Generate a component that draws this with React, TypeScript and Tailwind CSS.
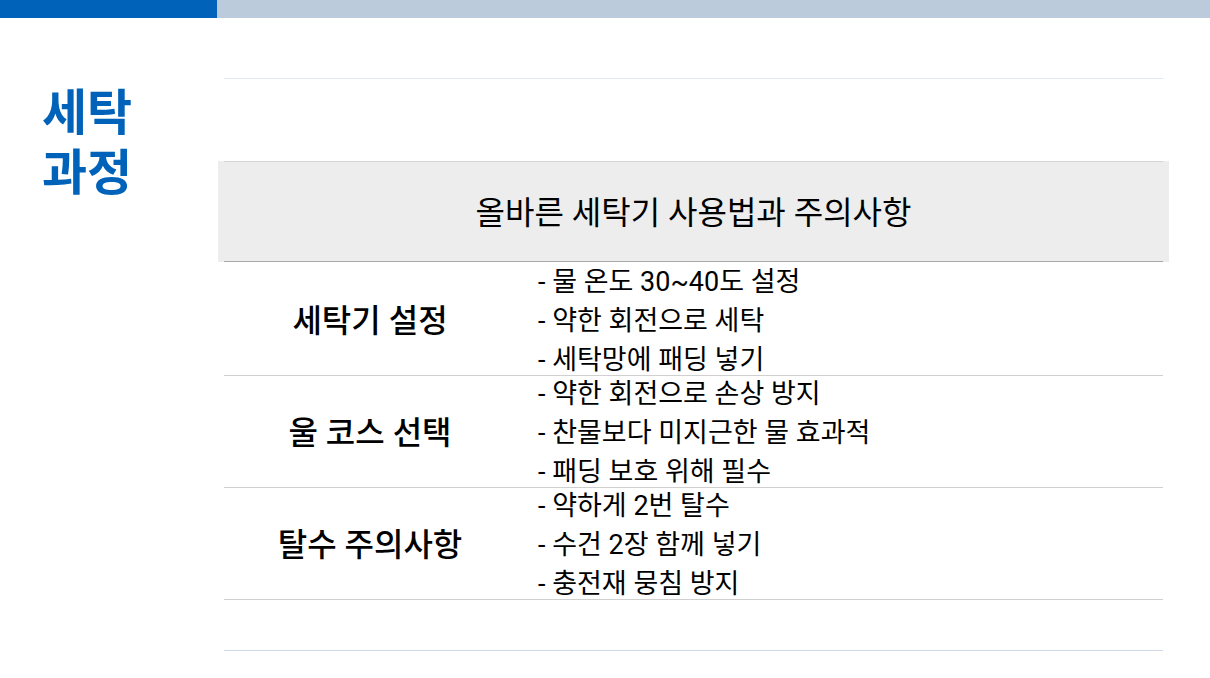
import React from 'react'

const rows = [
    { label: '세탁기 설정', items: ['- 물 온도 30~40도 설정', '- 약한 회전으로 세탁', '- 세탁망에 패딩 넣기'] },
    { label: '울 코스 선택', items: ['- 약한 회전으로 손상 방지', '- 찬물보다 미지근한 물 효과적', '- 패딩 보호 위해 필수'] },
    { label: '탈수 주의사항', items: ['- 약하게 2번 탈수', '- 수건 2장 함께 넣기', '- 충전재 뭉침 방지'] },
]

const font = { fontFamily: 'Roboto, "Noto Sans CJK KR", sans-serif' }

export default function App() {
    return (
        <div className="w-[1210px] h-[678px] bg-white overflow-hidden" style={font}>
            <div className="flex h-[18px]">
                <div className="w-[217px] bg-[#0062b8]" />
                <div className="flex-1 bg-[#bccbdb]" />
            </div>

            <div className="flex">
                <div className="w-[218px] pl-[42px] pt-[66px]">
                    <h1 className="text-[49px] leading-[60px] font-bold text-[#0062b8]">
                        세탁
                        <br />
                        과정
                    </h1>
                </div>

                <div className="w-[951px] pt-[60px]">
                    <div className="mx-[6px] border-t border-[#e2e8f0] h-[83px]" />

                    <div className="bg-[#ededed] px-[6px]">
                        <div className="h-[101px] pt-[3px] border-t border-[#d4d4d4] border-b border-b-[#a8a8a8] flex items-center justify-center">
                            <span className="text-[32px] text-black">올바른 세탁기 사용법과 주의사항</span>
                        </div>
                    </div>

                    <div className="mx-[6px] mt-[2px]">
                        {rows.map((row) => (
                            <div key={row.label} className="flex h-[112px] border-b border-[#d0d0d0]">
                                <div className="w-[292px] pt-[2px] flex items-center justify-center">
                                    <span className="text-[32px] font-medium text-black">{row.label}</span>
                                </div>
                                <div className="flex-1 pl-[22px] pt-[4px] flex flex-col justify-center">
                                    {row.items.map((item) => (
                                        <div key={item} className="text-[27px] leading-[39px] text-black whitespace-nowrap">
                                            {item}
                                        </div>
                                    ))}
                                </div>
                            </div>
                        ))}

                        <div className="h-[51px] border-b border-[#cfd9e5]" />
                    </div>
                </div>
            </div>
        </div>
    )
}
